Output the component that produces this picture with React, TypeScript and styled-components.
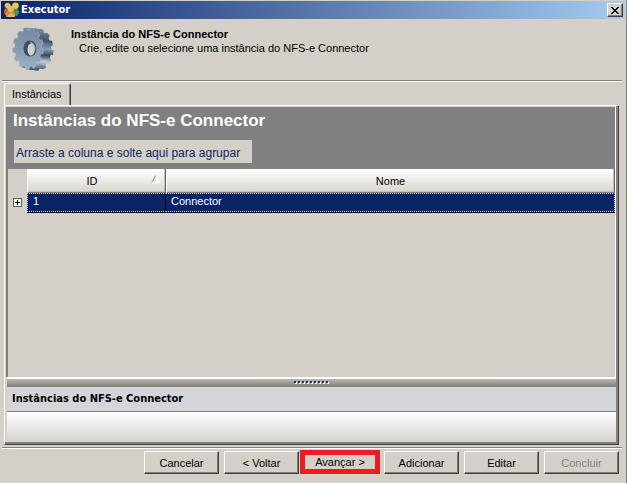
import React from "react";
import styled, { createGlobalStyle } from "styled-components";

const Global = createGlobalStyle`
  * { box-sizing: border-box; }
  html, body, #root { height: 100%; }
  body {
    margin: 0;
    background: #d4d0c8;
    color: #000;
    font: 11px/14px "Liberation Sans", Arial, sans-serif;
  }
`;

const Window = styled.main`
  display: flex;
  flex-direction: column;
  min-height: 100%;
  padding: 1px 0 0 1px;
  border-right: 1px solid #808080;
`;

const TitleBar = styled.header`
  display: flex;
  align-items: center;
  height: 18px;
  margin-right: 1px;
  padding: 0 2px 0 3px;
  gap: 2px;
  background: linear-gradient(90deg, #0a246a, #a6caf0);
  color: #fff;
`;

const WindowTitle = styled.h1`
  flex: 1;
  margin: 0;
  font: bold 11px/16px "DejaVu Sans Condensed", "DejaVu Sans", sans-serif;
`;

const CloseButton = styled.button`
  display: flex;
  align-items: center;
  justify-content: center;
  width: 16px;
  height: 14px;
  padding: 0;
  border: 1px solid;
  border-color: #fff #404040 #404040 #fff;
  background: #d4d0c8;
  box-shadow: inset -1px -1px #808080;
`;

const Intro = styled.section`
  display: flex;
  gap: 15px;
  height: 61px;
  padding: 8px 11px 0;
`;

const IntroTitle = styled.h2`
  margin: 0;
  font: bold 11px/14px "Liberation Sans", Arial, sans-serif;
`;

const IntroText = styled.p`
  margin: 0;
  padding-left: 8px;
`;

const Rule = styled.hr`
  height: 2px;
  margin: 0 4px 0 1px;
  border: 0;
  border-top: 1px solid #808080;
  border-bottom: 1px solid #fff;
`;

const TabList = styled.div`
  display: flex;
  margin: 1px 7px 0 3px;
`;

const Tab = styled.button`
  height: 22px;
  padding: 0 8px 2px 7px;
  border: 1px solid;
  border-color: #fff #404040 transparent #fff;
  border-bottom: 0;
  border-radius: 2px 2px 0 0;
  background: #d4d0c8;
  box-shadow: inset -1px 0 #808080;
  color: #000;
  font: inherit;
`;

const Panel = styled.section`
  flex: 1;
  display: flex;
  flex-direction: column;
  margin: 0 7px 2px 3px;
  border: 1px solid;
  border-color: #fff #404040 #404040 #fff;
  box-shadow: inset -2px -2px #808080;
  padding: 1px 2px 2px 1px;
`;

const Grid = styled.div`
  flex: 1;
  border-left: 2px solid #808080;
  border-right: 1px solid #fff;
`;

const GroupArea = styled.div`
  height: 62px;
  padding: 5px 5px 0;
  background: #808080;
`;

const GridTitle = styled.h2`
  margin: 0 0 10px;
  color: #fff;
  font: bold 17px/18px "Liberation Sans", Arial, sans-serif;
`;

const GroupHint = styled.div`
  display: inline-block;
  height: 23px;
  margin-left: 1px;
  padding: 0 12px 0 2px;
  background: #d4d0c8;
  color: #0a246a;
  font-size: 12px;
  line-height: 26px;
`;

const Table = styled.table`
  width: 100%;
  table-layout: fixed;
  border-collapse: separate;
  border-spacing: 0;
`;

const HeadCell = styled.th<{ $width?: number }>`
  position: relative;
  width: ${(p) => (p.$width ? `${p.$width}px` : "auto")};
  height: 24px;
  padding: 0 9px 0 0;
  border-right: 1px solid #606060;
  border-bottom: 1px solid #808080;
  border-left: 1px solid #fff;
  background: linear-gradient(#fff, #d8d5ce);
  box-shadow: inset -1px -1px #c4c1b9;
  font-weight: normal;
  &:last-child { padding: 0; }
`;

const CornerCell = styled.td`
  width: 19px;
  padding: 0;
`;

const SortMark = styled.svg`
  position: absolute;
  top: 6px;
  right: 4px;
`;

const ExpandCell = styled.td`
  height: 19px;
  padding: 0 0 0 5px;
`;

const ExpandButton = styled.button`
  display: block;
  width: 9px;
  height: 9px;
  padding: 0;
  border: 1px solid #606060;
  background: #fff;
  svg { display: block; }
`;

const Cell = styled.td`
  height: 19px;
  padding: 0 5px 3px;
  border: 1px dotted #f4dfa0;
  border-left: 0;
  background: #0a246a;
  color: #fff;
  line-height: 13px;
  box-shadow: 0 1px #000;
  &:nth-child(2) {
    border-left: 1px dotted #f4dfa0;
    border-right: 1px solid #000;
  }
`;

const Splitter = styled.div`
  display: flex;
  justify-content: center;
  align-items: center;
  height: 9px;
  margin-left: 1px;
  border-top: 2px solid #fff;
  background: linear-gradient(#bab9b2, #85857f);
`;

const DetailTitle = styled.h3`
  height: 26px;
  margin: 0 0 0 1px;
  padding: 0 5px;
  border-top: 1px solid #808080;
  border-bottom: 1px solid #808080;
  background: #d4d5d9;
  font: bold 11px/24px "DejaVu Sans Condensed", "DejaVu Sans", sans-serif;
`;

const DetailBody = styled.div`
  height: 30px;
  margin-left: 1px;
  background: linear-gradient(#fff, #d6d3cb);
`;

const Actions = styled.footer`
  display: flex;
  justify-content: flex-end;
  gap: 5px;
  height: 34px;
  padding: 2px 7px 0 0;
`;

const Action = styled.button<{ $marked?: boolean }>`
  width: 75px;
  height: 23px;
  padding: 0;
  border: 1px solid;
  border-color: #fff #404040 #404040 #fff;
  background: #d4d0c8;
  box-shadow: inset -1px -1px #808080;
  color: #000;
  font: inherit;
  line-height: 20px;
  &:disabled { color: #808080; }
  ${(p) =>
    p.$marked &&
    `
    width: 80px;
    height: 24px;
    margin: -1px -1px 0 -4px;
    border: 5px solid #ed1c24;
    box-shadow: none;
    line-height: 14px;
  `}
`;

const gearPath = (cx: number, cy: number) => {
  const points: string[] = [];
  for (let i = 0; i < 13; i++) {
    [
      [0, 0.86],
      [3, 1],
      [15, 1],
      [18, 0.86],
    ].forEach(([turn, reach]) => {
      const angle = (((i * 360) / 13 + turn) * Math.PI) / 180;
      points.push(
        `${(cx + Math.cos(angle) * 15.5 * reach).toFixed(1)} ${(cy + Math.sin(angle) * 21 * reach).toFixed(1)}`
      );
    });
  }
  return `M${points.join("L")}Z`;
};

const Gear = () => (
  <svg width="44" height="46" viewBox="0 0 44 46" aria-hidden="true">
    <defs>
      <linearGradient id="face" x1="0" y1="0" x2="0" y2="1">
        <stop offset="0" stopColor="#72879d" />
        <stop offset=".55" stopColor="#899cb2" />
        <stop offset="1" stopColor="#a0b1c5" />
      </linearGradient>
      <linearGradient id="edge" x1="0" y1="0" x2="0" y2="1">
        <stop offset="0" stopColor="#8194a8" />
        <stop offset=".3" stopColor="#3f5368" />
        <stop offset=".5" stopColor="#8b9fb4" />
        <stop offset=".65" stopColor="#344a61" />
        <stop offset=".8" stopColor="#c0cdda" />
        <stop offset="1" stopColor="#3d5269" />
      </linearGradient>
    </defs>
    {[10, 9, 8, 7, 6, 5, 4, 3, 2, 1].map((d) => (
      <path key={d} d={gearPath(16 + d, 21.5 + d * 0.1)} fill="url(#edge)" />
    ))}
    <path d={gearPath(16, 21.5)} fill="url(#face)" stroke="#a9b8c8" strokeWidth=".5" />
    <ellipse cx="18" cy="21.5" rx="6.5" ry="8" fill="#394f67" />
    <path d="M18 14Q24 17 23.5 22Q23 27 18 29Q22 23 18 14Z" fill="#8ea1b5" />
    <ellipse cx="19" cy="22.5" rx="3.5" ry="6" fill="#d4d0c8" />
  </svg>
);

const People = () => (
  <svg width="15" height="16" viewBox="0 0 15 16" aria-hidden="true">
    <path d="M0 10Q0 6 4 6L7 9V13H1Z" fill="#d95f32" />
    <path d="M9 7Q15 5 15 11L13 14H8Z" fill="#3f9850" />
    <circle cx="3.5" cy="3.5" r="2.8" fill="#efc05a" />
    <circle cx="11.5" cy="3.8" r="3.3" fill="#f8c92d" />
    <path d="M2 15V11Q4 8 7 8Q12 9 11 15Z" fill="#c98f45" />
    <circle cx="6.8" cy="6.8" r="3.2" fill="#e9b76c" />
    <path d="M4 13L7 11L10 13V15H4Z" fill="#e8b565" />
  </svg>
);

const actions = [
  { label: "Cancelar" },
  { label: "< Voltar" },
  { label: "Avançar >", marked: true },
  { label: "Adicionar" },
  { label: "Editar" },
  { label: "Concluir", disabled: true },
];

export default function App() {
  return (
    <>
      <Global />
      <Window>
        <TitleBar>
          <People />
          <WindowTitle>Executor</WindowTitle>
          <CloseButton aria-label="Fechar">
            <svg width="8" height="7" viewBox="0 0 8 7" shapeRendering="crispEdges">
              <path d="M0 0h2v1h1v1h2V1h1V0h2v1H7v1H6v1H5v1h1v1h1v1h1v1H6V6H5V5H3v1H2v1H0V6h1V5h1V4h1V3H2V2H1V1H0Z" fill="#000" />
            </svg>
          </CloseButton>
        </TitleBar>
        <Intro>
          <Gear />
          <div>
            <IntroTitle>Instância do NFS-e Connector</IntroTitle>
            <IntroText>Crie, edite ou selecione uma instância do NFS-e Connector</IntroText>
          </div>
        </Intro>
        <Rule />
        <TabList role="tablist">
          <Tab role="tab" aria-selected="true">Instâncias</Tab>
        </TabList>
        <Panel>
          <Grid>
            <GroupArea>
              <GridTitle>Instâncias do NFS-e Connector</GridTitle>
              <GroupHint>Arraste a coluna e solte aqui para agrupar</GroupHint>
            </GroupArea>
            <Table>
              <thead>
                <tr>
                  <CornerCell />
                  <HeadCell $width={139} scope="col">
                    ID
                    <SortMark width="10" height="9" viewBox="0 0 10 9">
                      <path d="M1 7.5L4.5.5" stroke="#808080" fill="none" />
                      <path d="M5 .5L8.5 7.5H1" stroke="#fff" strokeWidth="1.3" fill="none" />
                    </SortMark>
                  </HeadCell>
                  <HeadCell scope="col">Nome</HeadCell>
                </tr>
              </thead>
              <tbody>
                <tr>
                  <ExpandCell>
                    <ExpandButton aria-label="Expandir">
                      <svg width="7" height="7" viewBox="0 0 7 7" shapeRendering="crispEdges">
                        <path d="M1 3h5v1H1zM3 1h1v5H3z" fill="#000" />
                      </svg>
                    </ExpandButton>
                  </ExpandCell>
                  <Cell>1</Cell>
                  <Cell>Connector</Cell>
                </tr>
              </tbody>
            </Table>
          </Grid>
          <Splitter>
            <svg width="36" height="4" viewBox="0 0 36 4" shapeRendering="crispEdges" aria-hidden="true">
              {Array.from({ length: 9 }, (_, i) => (
                <g key={i}>
                  <rect x={i * 4 + 1} y="1" width="2" height="2" fill="#fff" />
                  <rect x={i * 4} y="0" width="2" height="2" fill="#28344a" />
                </g>
              ))}
            </svg>
          </Splitter>
          <DetailTitle>Instâncias do NFS-e Connector</DetailTitle>
          <DetailBody />
        </Panel>
        <Rule />
        <Actions>
          {actions.map((a) => (
            <Action key={a.label} $marked={a.marked} disabled={a.disabled}>
              {a.label}
            </Action>
          ))}
        </Actions>
      </Window>
    </>
  );
}
